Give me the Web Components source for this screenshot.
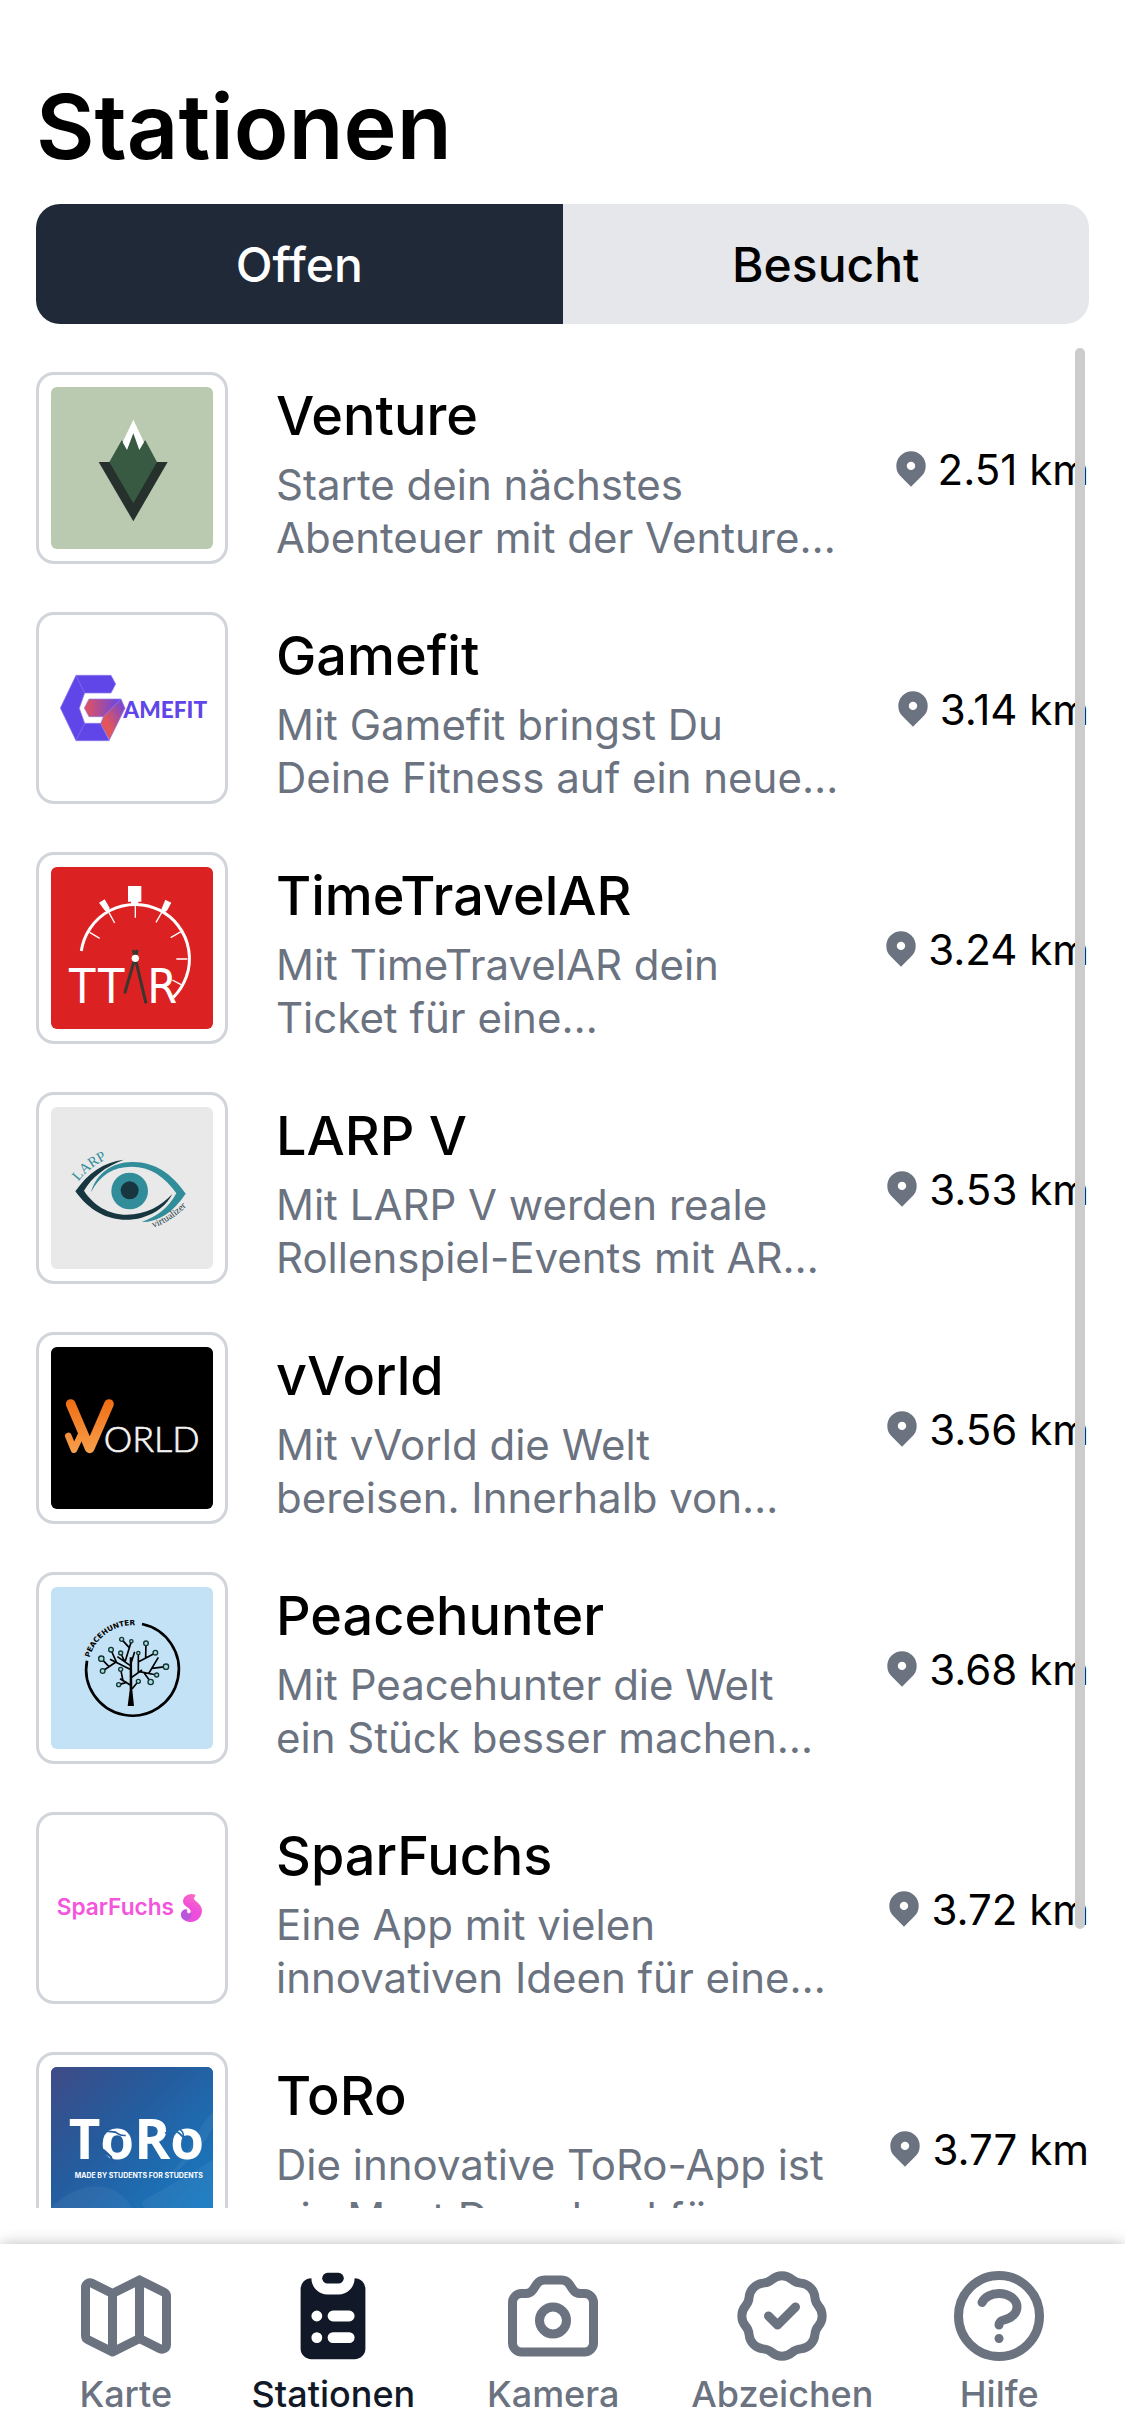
<!DOCTYPE html>
<html lang="de">
<head>
<meta charset="utf-8">
<meta name="viewport" content="width=device-width, initial-scale=1">
<title>Stationen</title>
<style>
  html, body { margin: 0; height: 100%; background: #fff; }
  body { font-family: Inter, "Open Sans", sans-serif; color: #000; }
</style>
</head>
<body>
<station-app>
  <h1 slot="title">Stationen</h1>
  <segmented-tabs slot="filter"></segmented-tabs>
  <station-list>
    <station-item distance="2.51 km"><station-logo slot="logo" kind="venture"></station-logo><span slot="name">Venture</span>Starte dein nächstes
Abenteuer mit der Venture…</station-item>
    <station-item distance="3.14 km"><station-logo slot="logo" kind="gamefit"></station-logo><span slot="name">Gamefit</span>Mit Gamefit bringst Du
Deine Fitness auf ein neue…</station-item>
    <station-item distance="3.24 km"><station-logo slot="logo" kind="ttar"></station-logo><span slot="name">TimeTravelAR</span>Mit TimeTravelAR dein
Ticket für eine…</station-item>
    <station-item distance="3.53 km"><station-logo slot="logo" kind="larp"></station-logo><span slot="name">LARP V</span>Mit LARP V werden reale
Rollenspiel-Events mit AR…</station-item>
    <station-item distance="3.56 km"><station-logo slot="logo" kind="vworld"></station-logo><span slot="name">vVorld</span>Mit vVorld die Welt
bereisen. Innerhalb von…</station-item>
    <station-item distance="3.68 km"><station-logo slot="logo" kind="peace"></station-logo><span slot="name">Peacehunter</span>Mit Peacehunter die Welt
ein Stück besser machen…</station-item>
    <station-item distance="3.72 km"><station-logo slot="logo" kind="fuchs"></station-logo><span slot="name">SparFuchs</span>Eine App mit vielen
innovativen Ideen für eine…</station-item>
    <station-item distance="3.77 km"><station-logo slot="logo" kind="toro"></station-logo><span slot="name">ToRo</span>Die innovative ToRo-App ist
ein Must Download für…</station-item>
  </station-list>
  <tab-bar slot="nav">
    <tab-link icon="map" href="#karte">Karte</tab-link>
    <tab-link icon="list" href="#stationen" active>Stationen</tab-link>
    <tab-link icon="camera" href="#kamera">Kamera</tab-link>
    <tab-link icon="badge" href="#abzeichen">Abzeichen</tab-link>
    <tab-link icon="help" href="#hilfe">Hilfe</tab-link>
  </tab-bar>
</station-app>

<script>
const define = (name, render, after) => customElements.define(name, class extends HTMLElement {
  constructor() { super(); this.attachShadow({ mode: 'open' }); }
  connectedCallback() {
    this.shadowRoot.innerHTML = render(this);
    if (after) after(this.shadowRoot, this);
  }
});

define('station-app', () => `
  <style>
    :host { display: flex; flex-direction: column; height: 100vh; overflow: hidden; }
    header { padding: 73px 36px 24px; display: flex; flex-direction: column; gap: 23px; }
    ::slotted(h1) { margin: 0; font-size: 90px; line-height: 108px; font-weight: 600; }
    main { flex: 1; min-height: 0; padding: 0 36px 36px; display: flex; flex-direction: column; }
  </style>
  <header><slot name="title"></slot><slot name="filter"></slot></header>
  <main><slot></slot></main>
  <slot name="nav"></slot>`);

define('segmented-tabs', () => `
  <style>
    :host { display: flex; border-radius: 24px; overflow: hidden; }
    button { flex: 1; height: 120px; border: 0; padding: 2px 0 0; background: #e5e7eb; color: #000;
      font: 500 48px/72px Inter, "Open Sans", sans-serif; }
    button[aria-pressed="true"] { background: #1f2937; color: #fff; }
  </style>
  <button type="button" aria-pressed="true">Offen</button>
  <button type="button" aria-pressed="false">Besucht</button>`,
  root => {
    const buttons = [...root.querySelectorAll('button')];
    buttons.forEach(b => b.addEventListener('click', () =>
      buttons.forEach(o => o.setAttribute('aria-pressed', String(o === b)))));
  });

define('station-list', () => `
  <style>
    :host { display: flex; flex-direction: column; flex: 1; min-height: 0; position: relative; }
    .scroll { flex: 1; min-height: 0; overflow-y: auto; scrollbar-width: none; }
    .thumb { position: absolute; top: 0; right: 4px; width: 10px; height: 85%; border-radius: 5px; background: #ccc; }
  </style>
  <div class="scroll" role="list"><slot></slot></div>
  <div class="thumb"></div>`);

define('station-item', el => `
  <style>
    :host { display: flex; align-items: center; gap: 48px; padding: 24px 0; }
    .frame { flex: none; box-sizing: border-box; width: 192px; height: 192px; padding: 12px;
      border: 3px solid #d1d5db; border-radius: 18px; }
    .text { flex: 1; min-width: 0; padding-top: 2px; }
    h2 { margin: 0; font-size: 54px; line-height: 84px; font-weight: 500; }
    p { margin: 0; font-size: 42px; line-height: 53px; color: #6b7280; white-space: pre-line; }
    .distance { flex: none; display: flex; align-items: center; gap: 6px; font-size: 42px; line-height: 60px; }
    .distance span { padding-top: 3px; }
    svg { width: 42px; height: 42px; fill: #6b7280; }
  </style>
  <div class="frame"><slot name="logo"></slot></div>
  <div class="text"><h2><slot name="name"></slot></h2><p><slot></slot></p></div>
  <div class="distance">
    <svg viewBox="0 0 20 20" aria-hidden="true"><path fill-rule="evenodd" d="M5.05 4.05a7 7 0 119.9 9.9L10 18.9l-4.95-4.95a7 7 0 010-9.9zM10 11a2 2 0 100-4 2 2 0 000 4z"/></svg>
    <span>${el.getAttribute('distance')}</span>
  </div>`);

const LOGOS = {
  venture: { bg: '#bacab1', art: `
    <path fill="#26312e" d="M206 306H413L310 484Z"/>
    <path fill="#385a43" d="M238 306L275 241L292 255L310 215L328 255L346 241L381 306L310 430Z"/>
    <path fill="#fff" d="M310 179L342 247L328 270L310 220L291 270L278 247Z"/>` },
  gamefit: { bg: '#fff', art: `
    <defs>
      <linearGradient id="a"><stop offset="0" stop-color="#e5525b"/><stop offset="1" stop-color="#6345e8"/></linearGradient>
      <linearGradient id="b" x1="0" y1="1" x2="1" y2="0"><stop offset=".35" stop-color="#e2555c"/><stop offset="1" stop-color="#6345e8"/></linearGradient>
    </defs>
    <g stroke="#8a78ef" stroke-width="2">
      <path fill="#6045e8" d="M138 196H243L257 222L243 249H164L148 295L164 340H212L238 392H138L91 294Z"/>
      <path fill="none" d="M138 196L164 249M138 392L164 340"/>
      <path fill="url(#a)" d="M177 267H273L220 320H177L163 294Z"/>
      <path fill="url(#b)" d="M273 267L285 295L238 390L212 341L220 320Z"/>
    </g>
    <text x="280" y="324" font-family="Lato" font-weight="900" font-size="68" fill="#6045e8">AMEFIT</text>` },
  ttar: { bg: '#db2122', art: `
    <g fill="none" stroke="#fff">
      <path stroke-width="9" d="M154 303A163 163 0 1 1 430 442"/>
      <path stroke-width="4" d="M316 168V203M237 188L254 219M395 188L378 217M179 247L209 265M453 245L422 263M472 327H439M453 404L427 390"/>
    </g>
    <g fill="#fff">
      <path d="M294 108H334V155H325V166H303V155H294ZM207 158L224 148L239 174L234 187L225 182ZM406 149L424 158L411 182L403 187L394 178Z"/>
      <text font-family="'DejaVu Sans Condensed','DejaVu Sans'" font-size="144" y="460"><tspan x="117">T</tspan><tspan x="204">T</tspan><tspan x="352">R</tspan></text>
    </g>
    <path stroke="#3b3530" stroke-width="9" fill="none" d="M322 300L284 430M310 300L348 460"/>
    <circle cx="316" cy="325" r="11" fill="#fff"/>` },
  larp: { bg: '#e9e9e9', art: `
    <defs><path id="l" d="M145 275Q178 230 245 200"/><path id="v" d="M370 413Q428 395 490 328"/></defs>
    <path fill="#17363f" d="M282 209C220 217 174 249 136 304C190 380 265 402 335 383C380 370 410 345 427 312C390 350 350 373 290 374C235 374 190 345 162 302C185 262 225 230 282 209Z"/>
    <path fill="#328d9b" d="M183 307C198 250 250 214 310 216C375 217 425 250 467 311C430 367 385 396 335 396C380 380 415 355 439 310C405 260 360 230 305 230C250 230 210 255 183 307Z"/>
    <circle cx="299" cy="303" r="55" fill="#328d9b"/><circle cx="299" cy="301" r="27" fill="#17363f"/>
    <text font-family="'Liberation Serif',serif" font-size="43" fill="#328d9b"><textPath href="#l">LARP</textPath></text>
    <text font-family="'Liberation Serif',serif" font-size="29" fill="#17363f"><textPath href="#v">virtualizer</textPath></text>` },
  vworld: { bg: '#000', art: `
    <defs><linearGradient id="o" gradientUnits="userSpaceOnUse" x1="0" y1="205" x2="0" y2="370"><stop offset="0" stop-color="#f06c12"/><stop offset="1" stop-color="#f7a04c"/></linearGradient></defs>
    <g fill="none" stroke="url(#o)" stroke-linejoin="round" stroke-linecap="round">
      <path stroke-width="20" d="M115 318L132 359L155 310"/>
      <path stroke-width="29" d="M122 222L179 355L237 222"/>
    </g>
    <text x="221" y="366" font-family="Lato" font-weight="300" font-size="108" fill="#f4f4f4" stroke="#f4f4f4" stroke-width="2">ORLD</text>` },
  peace: { bg: '#c4e2f5', art: `
    <defs><path id="p" d="M179 263A134 134 0 0 1 360 176"/></defs>
    <path fill="none" stroke="#000" stroke-width="8" d="M171 272A139 139 0 1 0 336 162"/>
    <text font-family="'DejaVu Sans'" font-weight="700" font-size="22"><textPath href="#p">PEACEHUNTER</textPath></text>
    <path d="M299 262H306L307 360L312 408H293L299 360Z"/>
    <g fill="none" stroke="#000" stroke-width="5">
      <path d="M300 298L240 268M300 286L262 260M285 276L304 214M297 232L275 208M272 249L284 275M303 280L314 245M260 278L243 240M258 276L218 303M237 290L214 266M301 345L270 326M279 332L272 298M290 337L266 344M305 322L336 300M325 310V249M326 275L376 249M347 262L348 220M328 305L380 315M357 309L385 262M366 295L408 290M342 308L362 336M306 357L325 334"/>
    </g>
    <g fill="#9fe0df" stroke="#16302f" stroke-width="4">
      <circle cx="275" cy="208" r="6"/><circle cx="304" cy="214" r="5"/><circle cx="348" cy="220" r="7"/><circle cx="243" cy="239" r="7"/><circle cx="272" cy="249" r="6"/><circle cx="325" cy="249" r="5"/><circle cx="376" cy="248" r="7"/><circle cx="214" cy="266" r="8"/><circle cx="218" cy="303" r="7"/><circle cx="272" cy="298" r="6"/><circle cx="408" cy="290" r="8"/><circle cx="380" cy="315" r="6"/><circle cx="362" cy="336" r="8"/><circle cx="325" cy="334" r="6"/><circle cx="266" cy="344" r="6"/>
    </g>` },
  fuchs: { bg: '#fff', art: `
    <defs><linearGradient id="f" x1=".7" y1="0" x2=".3" y2="1"><stop offset="0" stop-color="#fb6fc0"/><stop offset=".5" stop-color="#f04fd9"/><stop offset="1" stop-color="#e94fdd"/></linearGradient></defs>
    <text x="80" y="315" font-family="Inter" font-weight="600" font-size="68" fill="#f455dc">SparFuchs</text>
    <path fill="url(#f)" d="M496 254C478 248 460 257 459 274C459 290 481 292 482 304C482 314 469 311 472 304C462 296 453 303 453 315C454 328 468 336 482 336C502 336 516 320 516 301C515 282 496 275 492 267C490 262 497 261 496 254Z"/>
    <path fill="#b957dc" d="M474 300C464 294 453 303 453 315C454 325 462 331 472 331C482 328 486 318 483 306C481 313 471 313 470 307C469 304 471 301 474 300Z"/>` },
  toro: { bg: '#1f5fa5', art: `
    <defs><linearGradient id="t" x1="0" y1="0" x2="1" y2="1"><stop offset="0" stop-color="#3f4b86"/><stop offset=".35" stop-color="#265a9b"/><stop offset="1" stop-color="#157fc8"/></linearGradient></defs>
    <path fill="url(#t)" d="M63 51H549V537H63Z"/>
    <g fill="#fff" fill-opacity=".05"><path d="M549 185C490 240 500 300 400 390C460 360 520 290 549 230ZM63 470C190 360 280 420 310 480L330 537H63ZM335 455L549 330V537H370Z"/></g>
    <text x="116" y="327" font-family="'Open Sans'" font-weight="700" font-size="164" fill="#fff">ToRo</text>
    <g fill="none" stroke="#245c9d" stroke-width="5">
      <path d="M188 286C215 292 235 304 250 333M204 282C217 305 232 316 246 322M214 240C235 249 254 241 262 250C272 257 282 257 287 256"/>
      <path stroke="#226bae" d="M405 250C425 232 450 247 460 263C462 250 456 239 443 236"/>
    </g>
    <text x="134" y="385" font-family="Inter" font-weight="700" font-size="21" fill="#fff">MADE BY STUDENTS FOR STUDENTS</text>` }
};

define('station-logo', el => {
  const logo = LOGOS[el.getAttribute('kind')];
  const top = el.getAttribute('kind') === 'venture' ? 81 : 51;
  return `
  <style>
    :host { display: block; width: 100%; height: 100%; border-radius: 6px; overflow: hidden; background: ${logo.bg}; }
    svg { display: block; width: 100%; height: 100%; }
  </style>
  <svg viewBox="63 ${top} 486 486" role="img">${logo.art}</svg>`;
});

define('tab-bar', () => `
  <style>
    :host { display: block; flex: none; box-shadow: 0 0 15px -1px rgba(0, 0, 0, .3); background: #fff; }
    nav { display: flex; justify-content: space-evenly; align-items: center; height: 192px; }
  </style>
  <nav><slot></slot></nav>`);

const ICONS = {
  map: '<path d="M9 20l-5.447-2.724A1 1 0 013 16.382V5.618a1 1 0 011.447-.894L9 7m0 13l6-3m-6 3V7m6 10l4.553 2.276A1 1 0 0021 18.382V7.618a1 1 0 00-.553-.894L15 4m0 13V4m0 0L9 7"/>',
  list: '<path d="M9 2a1 1 0 000 2h2a1 1 0 100-2H9z"/><path fill-rule="evenodd" d="M4 5a2 2 0 012-2 3 3 0 003 3h2a3 3 0 003-3 2 2 0 012 2v11a2 2 0 01-2 2H6a2 2 0 01-2-2V5zm3 4a1 1 0 000 2h.01a1 1 0 100-2H7zm3 0a1 1 0 000 2h3a1 1 0 100-2h-3zm-3 4a1 1 0 100 2h.01a1 1 0 100-2H7zm3 0a1 1 0 100 2h3a1 1 0 100-2h-3z"/>',
  camera: '<path d="M3 9a2 2 0 012-2h.93a2 2 0 001.664-.89l.812-1.22A2 2 0 0110.07 4h3.86a2 2 0 011.664.89l.812 1.22A2 2 0 0018.07 7H19a2 2 0 012 2v9a2 2 0 01-2 2H5a2 2 0 01-2-2V9z"/><path d="M15 13a3 3 0 11-6 0 3 3 0 016 0z"/>',
  badge: '<path d="M9 12l2 2 4-4M7.835 4.697a3.42 3.42 0 001.946-.806 3.42 3.42 0 014.438 0 3.42 3.42 0 001.946.806 3.42 3.42 0 013.138 3.138 3.42 3.42 0 00.806 1.946 3.42 3.42 0 010 4.438 3.42 3.42 0 00-.806 1.946 3.42 3.42 0 01-3.138 3.138 3.42 3.42 0 00-1.946.806 3.42 3.42 0 01-4.438 0 3.42 3.42 0 00-1.946-.806 3.42 3.42 0 01-3.138-3.138 3.42 3.42 0 00-.806-1.946 3.42 3.42 0 010-4.438 3.42 3.42 0 00.806-1.946 3.42 3.42 0 013.138-3.138z"/>',
  help: '<path d="M8.228 9c.549-1.165 2.03-2 3.772-2 2.21 0 4 1.343 4 3 0 1.4-1.278 2.575-3.006 2.907-.542.104-.994.54-.994 1.093m0 3h.01M21 12a9 9 0 11-18 0 9 9 0 0118 0z"/>'
};

define('tab-link', el => {
  const active = el.hasAttribute('active');
  return `
  <style>
    :host { display: block; }
    a { display: flex; flex-direction: column; align-items: center; text-decoration: none;
      color: ${active ? '#111827' : '#6b7280'}; font-size: 36px; line-height: 48px; font-weight: 500; }
    svg { width: 108px; height: 108px; }
    .outline { fill: none; stroke: currentColor; stroke-width: 2; stroke-linecap: round; stroke-linejoin: round; }
    .solid { fill: currentColor; }
  </style>
  <a href="${el.getAttribute('href')}"${active ? ' aria-current="page"' : ''}>
    <svg class="${active ? 'solid' : 'outline'}" viewBox="${active ? '0 0 20 20' : '0 0 24 24'}" aria-hidden="true">${ICONS[el.getAttribute('icon')]}</svg>
    <span><slot></slot></span>
  </a>`;
});
</script>
</body>
</html>
